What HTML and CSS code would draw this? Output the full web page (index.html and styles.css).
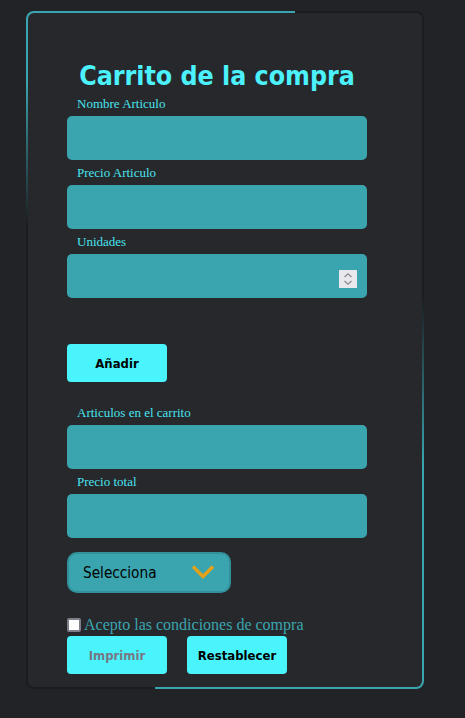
FILE: index.html
```html
<!DOCTYPE html>
<html lang="es">
<head>
<meta charset="utf-8">
<title>Carrito de la compra</title>
<link rel="stylesheet" href="styles.css">
</head>
<body>
<main class="card">
  <h1 class="title">Carrito de la compra</h1>
  <form class="form">
    <div class="field first">
      <label class="label" for="nombre">Nombre Articulo</label>
      <input class="input" id="nombre" type="text" autofocus>
    </div>
    <div class="field">
      <label class="label" for="precio">Precio Articulo</label>
      <input class="input" id="precio" type="text">
    </div>
    <div class="field">
      <label class="label" for="unidades">Unidades</label>
      <div class="num-wrap">
        <input class="input" id="unidades" type="number">
        <span class="spin" aria-hidden="true">
          <svg width="18" height="18" viewBox="0 0 18 18"><path d="M5.5 7 L9 3.8 L12.5 7" fill="none" stroke="#8b8b97" stroke-width="1.3"/><path d="M5.5 11 L9 14.2 L12.5 11" fill="none" stroke="#8b8b97" stroke-width="1.3"/></svg>
        </span>
      </div>
    </div>
    <button class="btn btn-add" type="button">Añadir</button>
    <div class="field after-btn">
      <label class="label" for="articulos">Articulos en el carrito</label>
      <input class="input" id="articulos" type="text">
    </div>
    <div class="field">
      <label class="label" for="total">Precio total</label>
      <input class="input" id="total" type="text">
    </div>
    <div class="select-wrap">
      <select class="select"><option>Selecciona</option></select>
      <svg class="chev" width="24" height="16" viewBox="0 0 24 16" aria-hidden="true"><path d="M2 2.5 L12 12.5 L22 2.5" fill="none" stroke="#e3a21b" stroke-width="3.4"/></svg>
    </div>
    <label class="check"><input class="checkbox" type="checkbox">Acepto las condiciones de compra</label>
    <div class="actions">
      <button class="btn btn-print" type="button" disabled>Imprimir</button>
      <button class="btn" type="reset">Restablecer</button>
    </div>
  </form>
</main>
</body>
</html>
```

FILE: styles.css
```css
html, body {
  margin: 0;
  background: #222327;
}
body {
  padding: 11px 0 0 26px;
  font-family: "DejaVu Sans Condensed", "DejaVu Sans", sans-serif;
  font-stretch: condensed;
}
.card {
  box-sizing: border-box;
  width: 398px;
  border: 2px solid transparent;
  border-radius: 8px;
  padding: 47px 55px 13px 39px;
  background:
    linear-gradient(#27282c, #27282c) padding-box,
    linear-gradient(90deg, #3aa5b0 0 269px, transparent 269px) 0 0 / 100% 4px no-repeat border-box,
    linear-gradient(180deg, #3aa5b0 0, #3aa5b0 70px, transparent 215px) 0 0 / 4px 100% no-repeat border-box,
    linear-gradient(90deg, transparent 0 129px, #3aa5b0 129px) 0 100% / 100% 4px no-repeat border-box,
    linear-gradient(180deg, transparent 0, transparent 285px, #3aa5b0 455px) 100% 0 / 4px 100% no-repeat border-box,
    #1b1c1f border-box;
}
.title {
  margin: 0;
  width: 300px;
  height: 32px;
  font-size: 26.5px;
  line-height: 32px;
  font-weight: bold;
  text-align: center;
  color: #4bf1fb;
}
.form {
  display: flex;
  flex-direction: column;
  align-items: flex-start;
  width: 300px;
}
.field {
  display: flex;
  flex-direction: column;
  margin-top: 5px;
  width: 300px;
}
.field.first { margin-top: 4px; }
.field.after-btn { margin-top: 23px; }
.label {
  display: block;
  padding-left: 10px;
  margin-bottom: 4px;
  font-family: "Liberation Serif", serif;
  font-size: 13px;
  line-height: 16px;
  color: #47e4ee;
}
.input {
  box-sizing: border-box;
  width: 300px;
  height: 44px;
  margin: 0;
  padding: 0 10px;
  border: none;
  border-radius: 5px;
  background: #3aa5af;
  font-family: "DejaVu Sans Condensed", "DejaVu Sans", sans-serif;
  font-size: 15px;
  color: #000;
  caret-color: #000;
  outline: none;
}
.input[type="number"] {
  -moz-appearance: textfield;
  appearance: textfield;
}
.input[type="number"]::-webkit-inner-spin-button,
.input[type="number"]::-webkit-outer-spin-button {
  -webkit-appearance: none;
  margin: 0;
}
.num-wrap {
  position: relative;
  width: 300px;
  height: 44px;
}
.spin {
  position: absolute;
  right: 10px;
  top: 16px;
  width: 18px;
  height: 18px;
  background: #e9e9ed;
  display: flex;
}
.btn {
  box-sizing: border-box;
  width: 100px;
  height: 38px;
  margin: 0;
  padding: 0;
  border: none;
  border-radius: 4px;
  background: #4af4fc;
  font-family: "DejaVu Sans Condensed", "DejaVu Sans", sans-serif;
  font-stretch: condensed;
  font-weight: bold;
  font-size: 13px;
  color: #000;
}
.btn-add { margin-top: 46px; }
.btn-print { color: #777785; }
.select-wrap {
  position: relative;
  margin-top: 14px;
  width: 164px;
  height: 41px;
}
.select {
  box-sizing: border-box;
  width: 164px;
  height: 41px;
  margin: 0;
  padding: 0 0 0 14px;
  border: 2px solid #31909a;
  border-radius: 10px;
  background: #3aa5af;
  -webkit-appearance: none;
  appearance: none;
  font-family: "DejaVu Sans Condensed", "DejaVu Sans", sans-serif;
  font-stretch: condensed;
  font-size: 15.2px;
  color: #000;
  outline: none;
}
.chev {
  position: absolute;
  left: 124px;
  top: 12px;
  pointer-events: none;
}
.check {
  display: flex;
  align-items: center;
  margin-top: 23px;
  height: 18px;
  font-family: "Liberation Serif", serif;
  font-size: 16px;
  line-height: 18px;
  color: #3aa5af;
}
.checkbox {
  box-sizing: border-box;
  -webkit-appearance: none;
  appearance: none;
  width: 14px;
  height: 14px;
  margin: 0 3px 0 0;
  border: 2px solid #7f7f8b;
  border-radius: 2px;
  background: #fff;
}
.actions {
  display: flex;
  gap: 20px;
  margin-top: 2px;
}
```
